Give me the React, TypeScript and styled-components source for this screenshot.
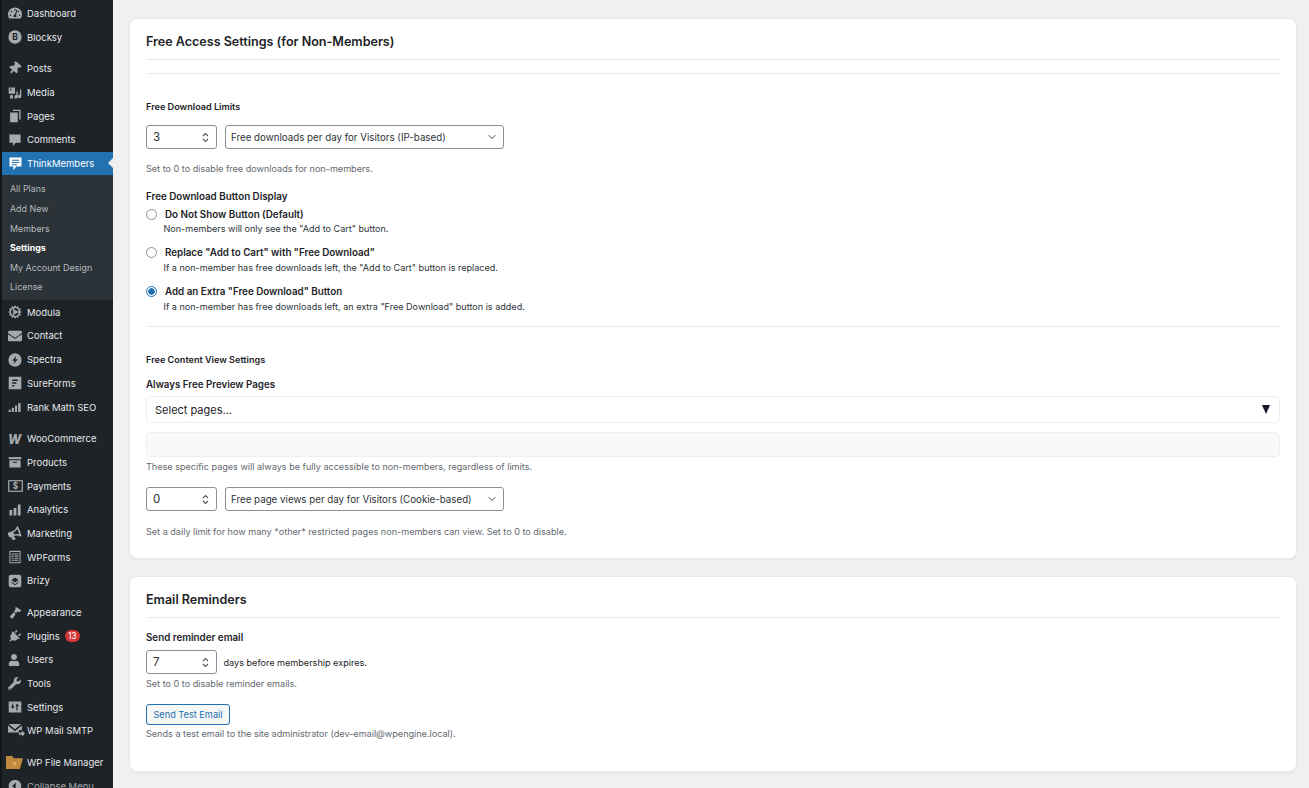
import React from 'react';
import styled, { createGlobalStyle } from 'styled-components';
import { LuChevronDown, LuCog } from 'react-icons/lu';
import {
  FaTachometerAlt,
  FaThumbtack,
  FaEnvelope,
  FaBullhorn,
  FaPlug,
  FaUser,
  FaWrench,
} from 'react-icons/fa';

const GlobalStyle = createGlobalStyle`
  html, body {
    margin: 0;
    padding: 0;
    height: 100%;
    overflow: hidden;
    background: #f0f0f1;
  }
  * { box-sizing: border-box; }
`;

const Page = styled.div`
  display: flex;
  width: 1309px;
  height: 788px;
  overflow: hidden;
  font-family: Inter, "Liberation Sans", sans-serif;
  background: #f0f0f1;
`;

// Admin sidebar
const Sidebar = styled.nav`
  flex: 0 0 113px;
  height: 788px;
  overflow: hidden;
  background: #1d2327;
  border-left: 2px solid #14171a;
  padding-top: 1.6px;
`;

const MenuItem = styled.div<{ $active?: boolean; $gap?: boolean }>`
  position: relative;
  display: flex;
  align-items: center;
  height: 23.7px;
  margin-top: ${(p) => (p.$gap ? '8px' : '0')};
  padding-left: 6px;
  background: ${(p) => (p.$active ? '#2271b1' : 'transparent')};
  color: ${(p) => (p.$active ? '#ffffff' : '#e6e8ea')};
  font-size: 9.5px;
  font-weight: 400;
`;

const ActiveArrow = styled.span`
  position: absolute;
  right: 0;
  top: 6px;
  border-top: 5.5px solid transparent;
  border-bottom: 5.5px solid transparent;
  border-right: 5.5px solid #f0f0f1;
`;

const IconSlot = styled.span`
  flex: 0 0 19px;
  display: flex;
  align-items: center;
  justify-content: flex-start;
  color: #a7aaad;
  svg { display: block; }
`;

const Badge = styled.span`
  margin-left: 5px;
  min-width: 15px;
  height: 12.5px;
  border-radius: 7px;
  background: #d63638;
  color: #fff;
  font-size: 8.5px;
  line-height: 12.5px;
  text-align: center;
`;

const Submenu = styled.div`
  background: #2c3338;
  height: 125px;
  padding-top: 4px;
`;

const SubItem = styled.div<{ $current?: boolean }>`
  height: 19.6px;
  line-height: 19.6px;
  padding-left: 8px;
  font-size: 8.9px;
  font-weight: ${(p) => (p.$current ? 700 : 400)};
  color: ${(p) => (p.$current ? '#ffffff' : '#b4b9be')};
`;

const CollapseLabel = styled.span`
  color: #a7aaad;
`;

// Content column
const Main = styled.main`
  flex: 1;
  min-width: 0;
  display: flex;
  flex-direction: column;
  gap: 17px;
  padding: 18px 12px 0 16px;
`;

const Card = styled.section<{ $height: number }>`
  height: ${(p) => p.$height}px;
  flex: none;
  background: #fff;
  border: 1px solid #e8e9eb;
  border-radius: 8px;
  box-shadow: 0 1px 2px rgba(0, 0, 0, 0.05);
  padding: 13px 16px 0;
`;

const CardTitle = styled.h2`
  margin: 0;
  height: 28px;
  line-height: 20px;
  padding-bottom: 9px;
  border-bottom: 1px solid #e8e9eb;
  font-size: 12.55px;
  font-weight: 600;
  color: #1d2327;
`;

const Divider = styled.hr<{ $top: number }>`
  margin: ${(p) => p.$top}px 0 0;
  height: 1px;
  border: 0;
  background: #e8e9eb;
`;

const Label = styled.div<{ $top: number; $size?: number }>`
  margin-top: ${(p) => p.$top}px;
  height: 14px;
  line-height: 16px;
  font-size: ${(p) => p.$size ?? 9.1}px;
  font-weight: 600;
  color: #1d2327;
`;

const Help = styled.p<{ $top: number }>`
  margin: ${(p) => p.$top}px 0 0;
  height: 14px;
  line-height: 16px;
  font-size: 9.08px;
  color: #646970;
`;

const FieldRow = styled.div<{ $top: number }>`
  display: flex;
  align-items: center;
  height: 24px;
  margin-top: ${(p) => p.$top}px;
`;

const NumberBox = styled.div`
  flex: 0 0 71px;
  height: 24px;
  display: flex;
  align-items: center;
  justify-content: space-between;
  padding: 0 7px 0 6px;
  background: #fff;
  border: 1px solid #8c8f94;
  border-radius: 3px;
  font-size: 11.5px;
  color: #2c3338;
`;

const SelectBox = styled.div`
  flex: 0 0 279px;
  height: 24px;
  margin-left: 8px;
  display: flex;
  align-items: center;
  justify-content: space-between;
  padding: 0 5px;
  background: #fff;
  border: 1px solid #8c8f94;
  border-radius: 3px;
  font-size: 9.75px;
  color: #2c3338;
`;

const Inline = styled.span`
  margin-left: 6.5px;
  font-size: 9.1px;
  color: #1d2327;
`;

const RadioOption = styled.div<{ $top: number }>`
  display: flex;
  align-items: center;
  height: 14px;
  margin-top: ${(p) => p.$top}px;
  font-size: 9.8px;
  font-weight: 600;
  color: #1d2327;
`;

const RadioDot = styled.span<{ $checked?: boolean }>`
  flex: 0 0 11px;
  width: 11px;
  height: 11px;
  margin-right: 8px;
  border-radius: 50%;
  border: 1px solid ${(p) => (p.$checked ? '#2271b1' : '#8c8f94')};
  background: ${(p) =>
    p.$checked ? 'radial-gradient(circle, #2271b1 0 3px, #fff 3.5px)' : '#fff'};
`;

const RadioHint = styled.div<{ $top: number }>`
  margin: ${(p) => p.$top}px 0 0 17.5px;
  height: 14px;
  line-height: 14px;
  font-size: 9.07px;
  color: #2c3338;
`;

const PagePicker = styled.div`
  height: 27px;
  margin-top: 5px;
  display: flex;
  align-items: center;
  justify-content: space-between;
  padding: 0 9px 0 8px;
  border: 1px solid #eceef0;
  border-radius: 5px;
  background: #fff;
  font-size: 11px;
  color: #1d2327;
`;

const PickerArrow = styled.span`
  width: 0;
  height: 0;
  border-left: 4.5px solid transparent;
  border-right: 4.5px solid transparent;
  border-top: 9px solid #111827;
`;

const PickedList = styled.div`
  height: 25px;
  margin-top: 9px;
  border: 1px solid #eceef0;
  border-radius: 5px;
  background: #f8f9fa;
`;

const OutlineButton = styled.button`
  display: block;
  width: 84px;
  height: 21px;
  margin-top: 14px;
  padding: 0;
  border: 1px solid #2271b1;
  border-radius: 3px;
  background: #f6f7f7;
  color: #2271b1;
  font-family: inherit;
  font-size: 9.2px;
`;

const Stepper = () => (
  <svg width="7" height="11" viewBox="0 0 7 11" fill="none" stroke="#50575e" strokeWidth="1.1">
    <path d="M1 4 L3.5 1.5 L6 4" />
    <path d="M1 7 L3.5 9.5 L6 7" />
  </svg>
);

const Svg = ({ children, size = 14 }: { children: React.ReactNode; size?: number }) => (
  <svg width={size} height={size} viewBox="0 0 20 20" fill="currentColor">
    {children}
  </svg>
);

// Sidebar icons, hand drawn where the packages have no close match
const icons: Record<string, React.ReactNode> = {
  dashboard: <FaTachometerAlt size={14} />,
  blocksy: (
    <Svg>
      <circle cx="10" cy="10" r="9.5" />
      <text x="10" y="14.5" fontSize="12" fontWeight="700" textAnchor="middle" fill="#1d2327">B</text>
    </Svg>
  ),
  posts: <FaThumbtack size={13} style={{ transform: 'rotate(40deg)' }} />,
  media: (
    <Svg>
      <path d="M1 2h9v9H1zM3 4v2.5h2V4z" fillRule="evenodd" />
      <path d="M12 8h2v7.5a2.500 2.500 0 1 1-2-2.400zM17 5h2v10a2.500 2.500 0 1 1-2-2.400z" />
      <path d="M3 13h4v5H3z" />
    </Svg>
  ),
  pages: (
    <Svg>
      <path d="M7 1h11v14h-2V3H7z" />
      <path d="M3 5h11v14H3z" />
    </Svg>
  ),
  comments: (
    <Svg>
      <path d="M2 2h16v12h-7l-4 5v-5H2z" />
    </Svg>
  ),
  think: (
    <Svg size={15}>
      <path
        fillRule="evenodd"
        d="M2 2h16v12h-7l-4 5v-5H2zM5 5v1.400h10V5zM5 8v1.400h10V8zM5 11v1.400h7V11z"
      />
    </Svg>
  ),
  modula: <LuCog size={14} strokeWidth={2.6} />,
  contact: <FaEnvelope size={14} />,
  spectra: (
    <Svg>
      <path
        fillRule="evenodd"
        d="M10 .5a9.500 9.500 0 1 1 0 19 9.500 9.500 0 0 1 0-19zM12 4L6 11h3.500L8 16l6-7h-3.500z"
      />
    </Svg>
  ),
  sureforms: (
    <Svg>
      <path
        fillRule="evenodd"
        d="M1 1h18v18H1zM6 5v2h8V5zM6 9v2h6V9zM6 13v2h3v-2z"
      />
    </Svg>
  ),
  rankmath: (
    <Svg>
      <path d="M1 14h3v3H1zM5.500 11h3v6h-3zM10 8h3v9h-3zM14.500 4l1.500 1 2-1.500V17h-3.500z" />
    </Svg>
  ),
  woo: (
    <svg width="16" height="14" viewBox="0 0 16 14" style={{ overflow: 'visible' }}>
      <text x="0" y="11.500" fontSize="12.500" fontWeight="800" fontStyle="italic" fontFamily="Inter, sans-serif" fill="currentColor">W</text>
    </svg>
  ),
  products: (
    <Svg>
      <path d="M1 3h18v3H1z" />
      <path fillRule="evenodd" d="M2 7.500h16V18H2zM7 9.500v1.500h6V9.500z" />
    </Svg>
  ),
  payments: (
    <svg width="15" height="14" viewBox="0 0 20 18">
      <rect x="1" y="2" width="18" height="14" fill="none" stroke="currentColor" strokeWidth="1.6" />
      <text x="10" y="13.500" fontSize="11" fontWeight="700" textAnchor="middle" fill="currentColor">$</text>
    </svg>
  ),
  analytics: (
    <Svg>
      <path d="M2 10h4v8H2zM8 7h4v11H8zM14 2h4v16h-4z" />
    </Svg>
  ),
  marketing: <FaBullhorn size={13} style={{ transform: 'rotate(-20deg)' }} />,
  wpforms: (
    <Svg>
      <path
        fillRule="evenodd"
        d="M2 1h16v18H2zM3.500 3v14.500h13V3zM5 5h10v1.500H5zM5 8h3v1.500H5zM9.500 8H15v1.500H9.500zM5 11h3v1.500H5zM9.500 11H15v1.500H9.500zM5 14h10v1.200H5z"
      />
    </Svg>
  ),
  brizy: (
    <Svg>
      <path
        fillRule="evenodd"
        d="M4 1h12a3 3 0 0 1 3 3v12a3 3 0 0 1-3 3H4a3 3 0 0 1-3-3V4a3 3 0 0 1 3-3zM10 5L5 8.500 10 12l5-3.500zM5 11l5 3.500 5-3.500v1.500l-5 3.500-5-3.500z"
      />
    </Svg>
  ),
  appearance: (
    <Svg>
      <path d="M11 1l8 5-2.500 3-3-1-2 2.500-3-2.500 2-2.500z" />
      <path d="M8 9l3 2.500-5 7-3.500-3z" />
    </Svg>
  ),
  plugins: <FaPlug size={13} style={{ transform: 'rotate(45deg)' }} />,
  users: <FaUser size={12} />,
  tools: <FaWrench size={13} />,
  settings: (
    <Svg>
      <path
        fillRule="evenodd"
        d="M1 2h18v16H1zM6 5v4H4l2.800 4L9 9H7.500V5zM13 5l-2.500 4H12v6h1.500V9H16z"
      />
    </Svg>
  ),
  smtp: (
    <svg width="17" height="15" viewBox="0 0 22 19" fill="currentColor">
      <path d="M1 1h16L9 8zM0 3l9 7.500L18 3v6h-4v3H0z" />
      <path d="M14 12h4V9.500l4 4-4 4V15h-4z" />
    </svg>
  ),
  filemanager: (
    <svg width="17" height="15" viewBox="0 0 22 19" style={{ marginLeft: -2 }}>
      <path d="M0 1h8l2 3h12l-4 14H0z" fill="#c08a3e" />
      <circle cx="11" cy="11" r="2.500" fill="#e0a85c" />
    </svg>
  ),
  collapse: (
    <Svg>
      <path fillRule="evenodd" d="M10 1a9 9 0 1 1 0 18 9 9 0 0 1 0-18zM11 5l-5 5 5 5z" />
    </Svg>
  ),
};

type Entry = { key: string; label: string; gap?: boolean; badge?: string };

const topItems: Entry[] = [
  { key: 'dashboard', label: 'Dashboard' },
  { key: 'blocksy', label: 'Blocksy' },
  { key: 'posts', label: 'Posts', gap: true },
  { key: 'media', label: 'Media' },
  { key: 'pages', label: 'Pages' },
  { key: 'comments', label: 'Comments' },
];

const bottomItems: Entry[] = [
  { key: 'modula', label: 'Modula' },
  { key: 'contact', label: 'Contact' },
  { key: 'spectra', label: 'Spectra' },
  { key: 'sureforms', label: 'SureForms' },
  { key: 'rankmath', label: 'Rank Math SEO' },
  { key: 'woo', label: 'WooCommerce', gap: true },
  { key: 'products', label: 'Products' },
  { key: 'payments', label: 'Payments' },
  { key: 'analytics', label: 'Analytics' },
  { key: 'marketing', label: 'Marketing' },
  { key: 'wpforms', label: 'WPForms' },
  { key: 'brizy', label: 'Brizy' },
  { key: 'appearance', label: 'Appearance', gap: true },
  { key: 'plugins', label: 'Plugins', badge: '13' },
  { key: 'users', label: 'Users' },
  { key: 'tools', label: 'Tools' },
  { key: 'settings', label: 'Settings' },
  { key: 'smtp', label: 'WP Mail SMTP' },
  { key: 'filemanager', label: 'WP File Manager', gap: true },
];

const subItems = ['All Plans', 'Add New', 'Members', 'Settings', 'My Account Design', 'License'];

const renderEntry = (item: Entry) => (
  <MenuItem key={item.key} $gap={item.gap}>
    <IconSlot>{icons[item.key]}</IconSlot>
    {item.label}
    {item.badge && <Badge>{item.badge}</Badge>}
  </MenuItem>
);

const NumberField = ({ value }: { value: string }) => (
  <NumberBox>
    {value}
    <Stepper />
  </NumberBox>
);

const SelectField = ({ value }: { value: string }) => (
  <SelectBox>
    {value}
    <LuChevronDown size={12} color="#3c434a" />
  </SelectBox>
);

export default function App() {
  return (
    <Page>
      <GlobalStyle />
      <Sidebar>
        {topItems.map(renderEntry)}
        <MenuItem $active>
          <IconSlot style={{ color: '#fff' }}>{icons.think}</IconSlot>
          ThinkMembers
          <ActiveArrow />
        </MenuItem>
        <Submenu>
          {subItems.map((label) => (
            <SubItem key={label} $current={label === 'Settings'}>
              {label}
            </SubItem>
          ))}
        </Submenu>
        {bottomItems.map(renderEntry)}
        <MenuItem>
          <IconSlot>{icons.collapse}</IconSlot>
          <CollapseLabel>Collapse Menu</CollapseLabel>
        </MenuItem>
      </Sidebar>

      <Main>
        <Card $height={541}>
          <CardTitle>Free Access Settings (for Non-Members)</CardTitle>
          <Divider $top={13} />
          <Label $top={25}>Free Download Limits</Label>
          <FieldRow $top={12}>
            <NumberField value="3" />
            <SelectField value="Free downloads per day for Visitors (IP-based)" />
          </FieldRow>
          <Help $top={12}>Set to 0 to disable free downloads for non-members.</Help>
          <Label $top={14} $size={9.8}>Free Download Button Display</Label>
          <RadioOption $top={4}>
            <RadioDot />
            Do Not Show Button (Default)
          </RadioOption>
          <RadioHint $top={1}>Non-members will only see the "Add to Cart" button.</RadioHint>
          <RadioOption $top={9.5}>
            <RadioDot />
            Replace "Add to Cart" with "Free Download"
          </RadioOption>
          <RadioHint $top={1.5}>If a non-member has free downloads left, the "Add to Cart" button is replaced.</RadioHint>
          <RadioOption $top={9}>
            <RadioDot $checked />
            Add an Extra "Free Download" Button
          </RadioOption>
          <RadioHint $top={1.5}>If a non-member has free downloads left, an extra "Free Download" button is added.</RadioHint>
          <Divider $top={12.5} />
          <Label $top={25}>Free Content View Settings</Label>
          <Label $top={11} $size={9.75}>Always Free Preview Pages</Label>
          <PagePicker>
            Select pages...
            <PickerArrow />
          </PagePicker>
          <PickedList />
          <Help $top={1.5}>These specific pages will always be fully accessible to non-members, regardless of limits.</Help>
          <FieldRow $top={14.5}>
            <NumberField value="0" />
            <SelectField value="Free page views per day for Visitors (Cookie-based)" />
          </FieldRow>
          <Help $top={13}>Set a daily limit for how many *other* restricted pages non-members can view. Set to 0 to disable.</Help>
        </Card>

        <Card $height={196}>
          <CardTitle>Email Reminders</CardTitle>
          <Label $top={12} $size={9.8}>Send reminder email</Label>
          <FieldRow $top={6}>
            <NumberField value="7" />
            <Inline>days before membership expires.</Inline>
          </FieldRow>
          <Help $top={1.5}>Set to 0 to disable reminder emails.</Help>
          <OutlineButton>Send Test Email</OutlineButton>
          <Help $top={1}>Sends a test email to the site administrator (dev-email@wpengine.local).</Help>
        </Card>
      </Main>
    </Page>
  );
}
